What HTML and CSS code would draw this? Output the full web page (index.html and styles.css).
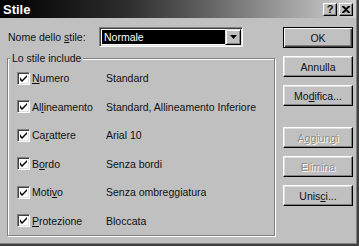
FILE: index.html
```html
<!DOCTYPE html>
<html lang="it">

<head>
    <meta charset="UTF-8">
    <meta name="viewport" content="width=device-width, initial-scale=1.0">
    <title>Stile</title>
    <link rel="stylesheet" href="styles.css">
</head>

<body>
    <div class="dialog">
        <div class="titlebar">
            <span class="title">Stile</span>
            <div class="titleBtns">
                <span class="tbtn help">?</span>
                <span class="tbtn">
                    <svg width="8" height="7" viewBox="0 0 8 7">
                        <path d="M0 0h2l2 2 2-2h2v1L5 3.5 8 6v1H6L4 5 2 7H0V6l3-2.5L0 1z" fill="#000" />
                    </svg>
                </span>
            </div>
        </div>
        <div class="content">
            <div class="main">
                <div class="nameRow">
                    <span class="nameLabel">Nome dello <u>s</u>tile:</span>
                    <div class="combo">
                        <span class="comboValue">Normale</span>
                        <span class="comboArrow">
                            <svg width="7" height="4" viewBox="0 0 7 4">
                                <path d="M0 0h7L3.5 4z" fill="#000" />
                            </svg>
                        </span>
                    </div>
                </div>
                <div class="group">
                    <span class="legend">Lo stile include</span>
                    <ul class="opts">
                        <li class="opt">
                            <span class="chk"><span class="box"><svg width="7" height="7" viewBox="0 0 7 7"><path d="M0 2v3l2 2 5-5V0L2 5z" fill="#000" /></svg></span><u>N</u>umero</span>
                            <span class="val">Standard</span>
                        </li>
                        <li class="opt">
                            <span class="chk"><span class="box"><svg width="7" height="7" viewBox="0 0 7 7"><path d="M0 2v3l2 2 5-5V0L2 5z" fill="#000" /></svg></span>Al<u>l</u>ineamento</span>
                            <span class="val">Standard, Allineamento Inferiore</span>
                        </li>
                        <li class="opt">
                            <span class="chk"><span class="box"><svg width="7" height="7" viewBox="0 0 7 7"><path d="M0 2v3l2 2 5-5V0L2 5z" fill="#000" /></svg></span>Ca<u>r</u>attere</span>
                            <span class="val">Arial 10</span>
                        </li>
                        <li class="opt">
                            <span class="chk"><span class="box"><svg width="7" height="7" viewBox="0 0 7 7"><path d="M0 2v3l2 2 5-5V0L2 5z" fill="#000" /></svg></span>B<u>o</u>rdo</span>
                            <span class="val">Senza bordi</span>
                        </li>
                        <li class="opt">
                            <span class="chk"><span class="box"><svg width="7" height="7" viewBox="0 0 7 7"><path d="M0 2v3l2 2 5-5V0L2 5z" fill="#000" /></svg></span>Moti<u>v</u>o</span>
                            <span class="val">Senza ombreggiatura</span>
                        </li>
                        <li class="opt">
                            <span class="chk"><span class="box"><svg width="7" height="7" viewBox="0 0 7 7"><path d="M0 2v3l2 2 5-5V0L2 5z" fill="#000" /></svg></span><u>P</u>rotezione</span>
                            <span class="val">Bloccata</span>
                        </li>
                    </ul>
                </div>
            </div>
            <div class="buttons">
                <button class="btn default">OK</button>
                <button class="btn">Annulla</button>
                <button class="btn">Mo<u>d</u>ifica...</button>
                <button class="btn disabled spaced">Aggiungi</button>
                <button class="btn disabled">Elimina</button>
                <button class="btn">Unis<u>c</u>i...</button>
            </div>
        </div>
    </div>
</body>

</html>
```

FILE: styles.css
```css
* {
    margin: 0;
    padding: 0;
    list-style: none;
    box-sizing: border-box;
}

body {
    font-family: "Liberation Sans", Arial, sans-serif;
    font-size: 10.5px;
    color: #111;
    background: #c0c0c0;
}

.dialog {
    width: 359px;
    height: 246px;
    background: #c0c0c0;
    border-right: 2px solid #404040;
    border-bottom: 2px solid #404040;
    box-shadow: inset -1px -1px 0 #808080;
}

.titlebar {
    height: 18px;
    width: 356px;
    display: flex;
    align-items: center;
    justify-content: space-between;
    padding: 0 3px;
    background: linear-gradient(to right, #000 0%, #2c2c2c 35%, #5a5a5a 55%, #d2d2d2 100%);
}

.title {
    color: #fff;
    font-weight: bold;
    font-size: 13px;
}

.titleBtns {
    display: flex;
    gap: 2px;
}

.tbtn {
    width: 14px;
    height: 13px;
    display: flex;
    align-items: center;
    justify-content: center;
    background: #c0c0c0;
    border: 1px solid;
    border-color: #fff #000 #000 #fff;
    box-shadow: inset -1px -1px 0 #808080;
    font-weight: bold;
    font-size: 11px;
    line-height: 1;
}

.content {
    display: flex;
    padding: 9px 0 0 7px;
}

.main {
    width: 268px;
}

.nameRow {
    display: flex;
    align-items: center;
    height: 20px;
}

.nameLabel {
    width: 92px;
    padding-left: 1px;
}

.combo {
    width: 144px;
    height: 20px;
    display: flex;
    background: #fff;
    border: 1px solid;
    border-color: #808080 #fff #fff #808080;
    box-shadow: inset 1px 1px 0 #404040, inset -1px -1px 0 #dfdfdf;
    padding: 2px;
}

.comboValue {
    flex: 1;
    background: #000;
    color: #fff;
    padding-left: 2px;
    line-height: 14px;
}

.comboArrow {
    width: 16px;
    display: flex;
    align-items: center;
    justify-content: center;
    background: #c0c0c0;
    border: 1px solid;
    border-color: #dfdfdf #000 #000 #dfdfdf;
    box-shadow: inset 1px 1px 0 #fff, inset -1px -1px 0 #808080;
    margin: -1px -1px -1px 0;
}

.group {
    position: relative;
    margin-top: 11px;
    height: 178px;
    border: 1px solid #808080;
    box-shadow: inset 1px 1px 0 #fff, 1px 1px 0 #fff;
    padding-top: 5px;
}

.legend {
    position: absolute;
    top: -7px;
    left: 2px;
    padding: 0 2px;
    line-height: 13px;
    background: #c0c0c0;
}

.opt {
    height: 28.5px;
    display: grid;
    grid-template-columns: 89px 1fr;
    align-items: center;
    padding-left: 9px;
}

.chk {
    display: flex;
    align-items: center;
}

.box {
    width: 13px;
    height: 13px;
    margin-right: 2px;
    display: flex;
    align-items: center;
    justify-content: center;
    background: #fff;
    border: 1px solid;
    border-color: #808080 #fff #fff #808080;
    box-shadow: inset 1px 1px 0 #404040, inset -1px -1px 0 #dfdfdf;
}

.buttons {
    width: 70px;
    margin-left: 8px;
    display: flex;
    flex-direction: column;
    gap: 8px;
}

.btn {
    height: 21px;
    font-family: inherit;
    font-size: 10.5px;
    color: #111;
    background: #c0c0c0;
    border: 1px solid;
    border-color: #fff #000 #000 #fff;
    box-shadow: inset -1px -1px 0 #808080, inset 1px 1px 0 #dfdfdf;
}

.default {
    border-color: #000;
    box-shadow: inset 1px 1px 0 #fff, inset -1px -1px 0 #404040, inset -2px -2px 0 #808080;
}

.disabled {
    color: #8c8c8c;
    text-shadow: 1px 1px 0 #fff;
}

.spaced {
    margin-top: 13px;
}
```
